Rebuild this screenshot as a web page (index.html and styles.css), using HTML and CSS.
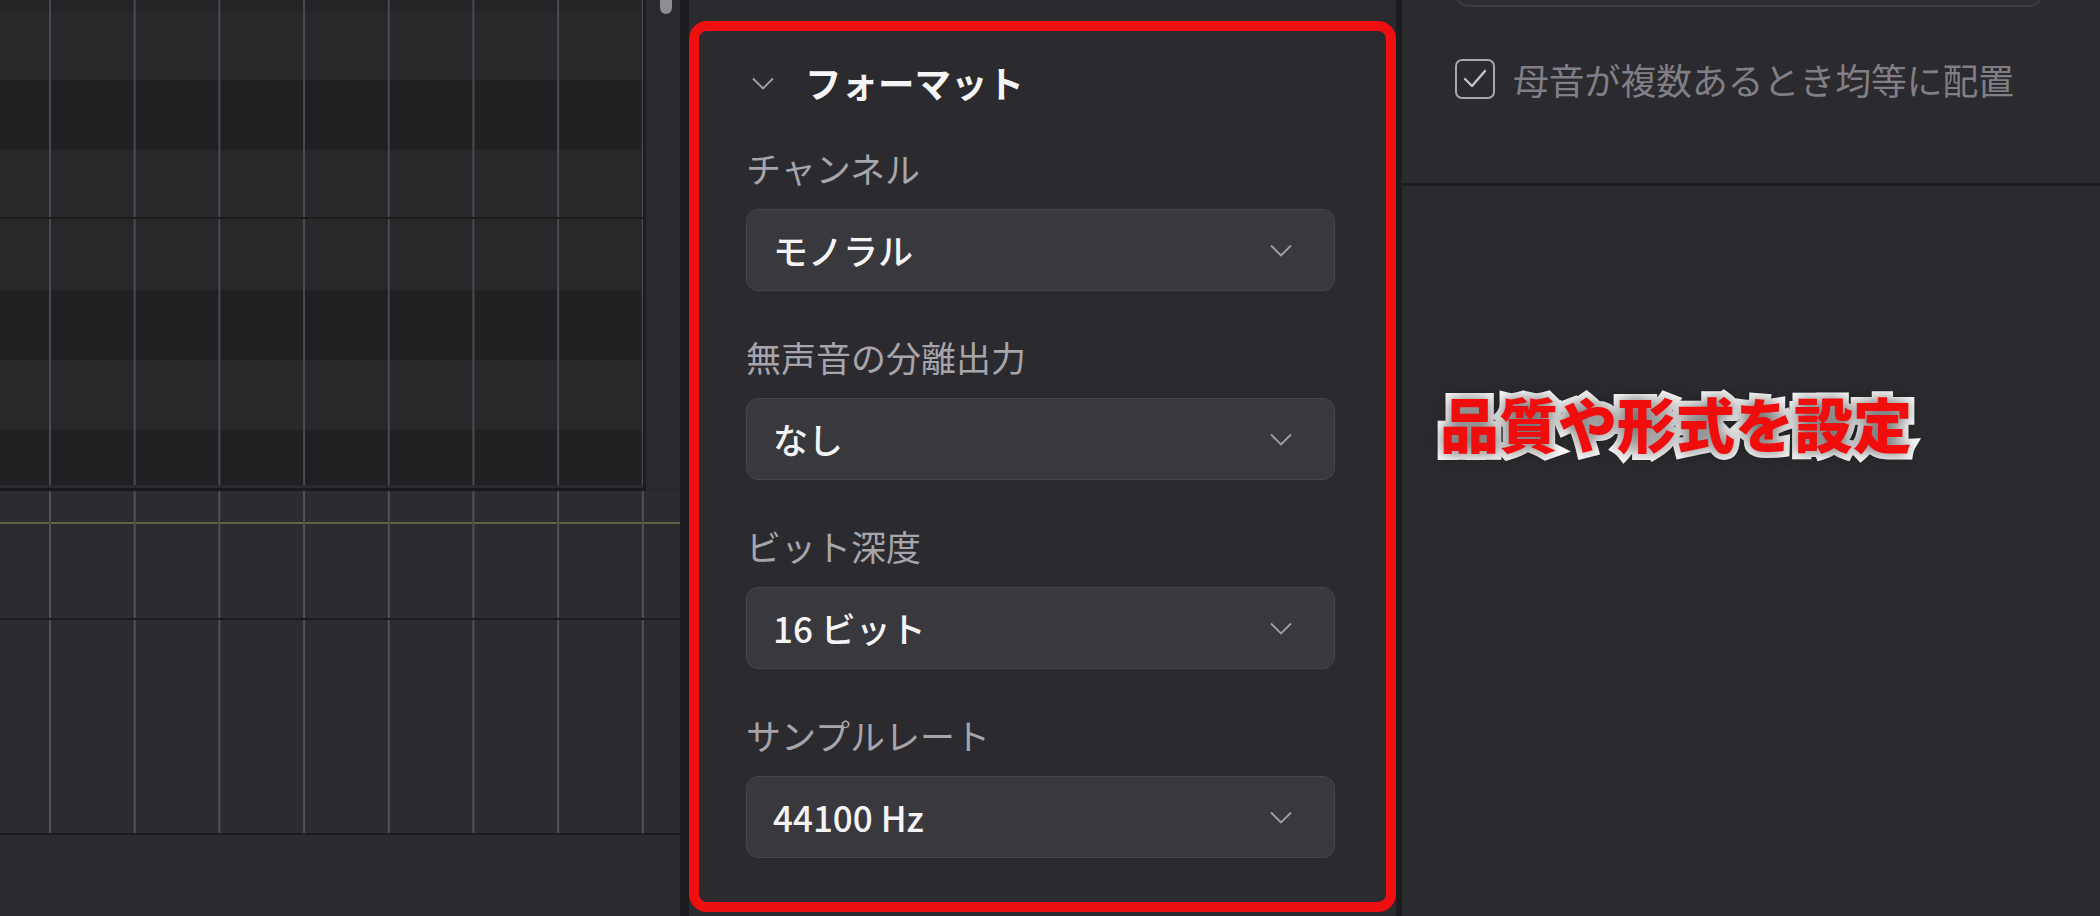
FILE: index.html
```html
<!DOCTYPE html>
<html lang="ja">
<head>
  <meta charset="UTF-8" />
  <meta name="viewport" content="width=device-width, initial-scale=1.0"/>
  <title>書き出し設定</title>
  <link rel="stylesheet" href="styles.css">
</head>
<body>

  <div class="app">

    <div class="editor">
      <div class="roll">
        <div class="roll-grid">
          <div class="lane lane-dark lane-top"></div>
          <div class="lane lane-light"></div>
          <div class="lane lane-dark"></div>
          <div class="lane lane-light lane-octave"></div>
          <div class="lane lane-light lane-b"></div>
          <div class="lane lane-dark"></div>
          <div class="lane lane-light"></div>
          <div class="lane lane-dark lane-last"></div>
        </div>
        <div class="scroll-track">
          <div class="scroll-thumb"></div>
        </div>
      </div>
      <div class="param-lane param-pitch"></div>
      <div class="param-lane param-volume"></div>
      <div class="editor-foot"></div>
    </div>

    <div class="panel">
      <div class="format-section">
        <div class="section-head">
          <svg class="head-chevron" width="22" height="13" viewBox="0 0 22 13">
            <polyline points="1,1.5 11,11.5 21,1.5" fill="none" stroke="#a3a2a8" stroke-width="1.8"/>
          </svg>
          <span class="section-title">フォーマット</span>
        </div>

        <div class="fields">
          <div class="field">
            <div class="field-label">チャンネル</div>
            <div class="select">
              <span class="select-value">モノラル</span>
              <svg class="select-chevron" width="22" height="13" viewBox="0 0 22 13">
                <polyline points="1,1.5 11,11.5 21,1.5" fill="none" stroke="#a09fa5" stroke-width="1.8"/>
              </svg>
            </div>
          </div>

          <div class="field">
            <div class="field-label">無声音の分離出力</div>
            <div class="select">
              <span class="select-value">なし</span>
              <svg class="select-chevron" width="22" height="13" viewBox="0 0 22 13">
                <polyline points="1,1.5 11,11.5 21,1.5" fill="none" stroke="#a09fa5" stroke-width="1.8"/>
              </svg>
            </div>
          </div>

          <div class="field">
            <div class="field-label">ビット深度</div>
            <div class="select">
              <span class="select-value">16 ビット</span>
              <svg class="select-chevron" width="22" height="13" viewBox="0 0 22 13">
                <polyline points="1,1.5 11,11.5 21,1.5" fill="none" stroke="#a09fa5" stroke-width="1.8"/>
              </svg>
            </div>
          </div>

          <div class="field">
            <div class="field-label">サンプルレート</div>
            <div class="select">
              <span class="select-value">44100 Hz</span>
              <svg class="select-chevron" width="22" height="13" viewBox="0 0 22 13">
                <polyline points="1,1.5 11,11.5 21,1.5" fill="none" stroke="#a09fa5" stroke-width="1.8"/>
              </svg>
            </div>
          </div>
        </div>
      </div>
    </div>

    <div class="side">
      <div class="side-top">
        <div class="side-input"></div>
        <div class="check-row">
          <span class="checkbox">
            <svg width="24" height="20" viewBox="0 0 24 20">
              <polyline points="2,10 9,17 22,2" fill="none" stroke="#c4c3c8" stroke-width="2.4" stroke-linecap="round" stroke-linejoin="round"/>
            </svg>
          </span>
          <span class="check-text">母音が複数あるとき均等に配置</span>
        </div>
      </div>

      <div class="callout">品質や形式を設定</div>
    </div>

  </div>

</body>
</html>
```

FILE: styles.css
```css
* {
  box-sizing: border-box;
  margin: 0;
  padding: 0;
}

body {
  width: 2100px;
  height: 916px;
  overflow: hidden;
  background-color: #2b2a2e;
  font-family: 'Noto Sans CJK JP', 'Noto Sans', sans-serif;
  color: #f2f2f4;
}

.app {
  display: flex;
  height: 916px;
}

/* piano roll on the left */

.editor {
  width: 680px;
  flex-shrink: 0;
  display: flex;
  flex-direction: column;
  background-color: #2b2a2e;
}

.roll {
  display: flex;
  height: 491px;
}

.roll-grid {
  width: 646px;
  border-right: 3px solid #1d1d1f;
  border-bottom: 3px solid #1a1a1c;
  display: flex;
  flex-direction: column;
}

.lane {
  background-image: linear-gradient(90deg, #4a4a4f 0 2px, transparent 2px);
  background-size: 84.7px 100%;
  background-position: 49px 0;
  background-repeat: repeat-x;
  height: 70px;
}

.lane-light {
  background-color: #28282b;
}

.lane-dark {
  background-color: #202022;
}

.lane-top {
  height: 10px;
  background-color: #242426;
}

.lane-octave {
  height: 69px;
  border-bottom: 2px solid #1c1c1e;
}

.lane-b {
  height: 71px;
}

.lane-last {
  height: 55px;
}

.scroll-track {
  flex: 1;
  background-color: #2a292d;
  padding-left: 14px;
}

.scroll-thumb {
  width: 12px;
  height: 14px;
  background-color: #8e8d92;
  border-radius: 0 0 6px 6px;
}

.param-lane {
  background-color: #2c2b2f;
  background-image: linear-gradient(90deg, #505055 0 2px, transparent 2px);
  background-size: 84.7px 100%;
  background-position: 49px 0;
  background-repeat: repeat-x;
  border-bottom: 2px solid #1c1c1e;
}

.param-pitch {
  height: 129px;
  background-image:
    linear-gradient(90deg, #505055 0 2px, transparent 2px),
    linear-gradient(180deg, transparent 31px, #5e6547 31px 33px, transparent 33px);
  background-size: 84.7px 100%, 100% 100%;
  background-position: 49px 0, 0 0;
  background-repeat: repeat-x, no-repeat;
}

.param-volume {
  height: 215px;
}

.editor-foot {
  flex: 1;
  background-color: #2b2a2e;
}

/* export settings panel */

.panel {
  width: 722px;
  flex-shrink: 0;
  border-left: 9px solid #1c1c1e;
  border-right: 6px solid #1c1c1e;
  padding-top: 21px;
  background-color: #2b2a2e;
}

.format-section {
  border: 10px solid #ee1010;
  border-radius: 18px;
  padding: 28px 51px 44px 47px;
}

.section-head {
  display: flex;
  align-items: center;
  height: 48px;
  margin-bottom: 37px;
  padding-left: 6px;
}

.head-chevron {
  margin-right: 31px;
}

.section-title {
  font-size: 36.5px;
  font-weight: 700;
  color: #f5f5f7;
  line-height: 48px;
}

.fields {
  display: flex;
  flex-direction: column;
  gap: 42px;
}

.field-label {
  font-size: 35px;
  line-height: 48px;
  color: #a6a5ab;
  margin-bottom: 17px;
}

.select {
  height: 82px;
  display: flex;
  align-items: center;
  justify-content: space-between;
  padding: 0 42px 0 26px;
  background-color: #39383d;
  border: 1.5px solid #46454a;
  border-radius: 12px;
}

.select-value {
  font-size: 35px;
  font-weight: 500;
  color: #f4f4f6;
  line-height: 48px;
}

/* right side */

.side {
  flex: 1;
  position: relative;
  background-color: #2b2a2e;
}

.side-top {
  display: flex;
  flex-direction: column;
  height: 186px;
  padding: 0 57px 0 53px;
  border-bottom: 3px solid #1c1c1e;
}

.side-input {
  height: 60px;
  flex-shrink: 0;
  margin-top: -53px;
  border: 2px solid #3c3b40;
  border-radius: 14px;
  background-color: #2e2d31;
}

.check-row {
  display: flex;
  align-items: center;
  margin-top: 52px;
  height: 40px;
}

.checkbox {
  width: 40px;
  height: 40px;
  flex-shrink: 0;
  border: 2.5px solid #a8a7ac;
  border-radius: 7px;
  display: flex;
  align-items: center;
  justify-content: center;
  margin-right: 18px;
}

.check-text {
  font-size: 35.8px;
  color: #807f85;
  line-height: 48px;
  white-space: nowrap;
}

/* annotation over the screenshot */

.callout {
  position: absolute;
  left: 38px;
  top: 393px;
  font-size: 59px;
  font-weight: 900;
  line-height: 1;
  color: #f00d0d;
  -webkit-text-stroke: 12px #ffffff;
  paint-order: stroke fill;
  text-shadow: 0 0 16px rgba(0, 0, 0, 0.7);
  white-space: nowrap;
}
```
